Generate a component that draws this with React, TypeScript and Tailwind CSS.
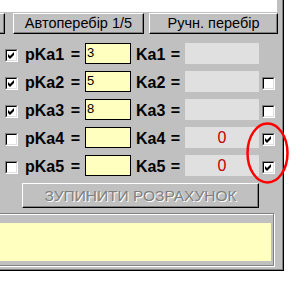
import React from "react";

const Check = ({ checked }: { checked: boolean }) => (
  <div className="w-[13px] h-[13px] flex-none border border-t-[#808080] border-l-[#808080] border-r-white border-b-white">
    <div className="w-full h-full border border-t-black border-l-black border-r-[#dfdfdf] border-b-[#dfdfdf] bg-white flex items-center justify-center">
      {checked && (
        <svg width="7" height="7" viewBox="0 0 7 7">
          <path d="M0 2 L2 4 L6 0 L6 3 L2 7 L0 5 Z" fill="black" />
        </svg>
      )}
    </div>
  </div>
);

const btn =
  "flex-none flex items-center justify-center bg-[#c0c0c0] border border-t-white border-l-white border-r-black border-b-black shadow-[inset_-1px_-1px_0_#808080]";

const rows = [
  { i: 1, left: true, val: "3", ka: "", right: null as boolean | null },
  { i: 2, left: true, val: "5", ka: "", right: false },
  { i: 3, left: true, val: "8", ka: "", right: false },
  { i: 4, left: false, val: "", ka: "0", right: true },
  { i: 5, left: false, val: "", ka: "0", right: true },
];

export default function App() {
  return (
    <div
      className="relative w-[305px] h-[287px] bg-white overflow-hidden"
      style={{ fontFamily: "'Liberation Sans', Arial, sans-serif" }}
    >
      <div className="relative w-[284px] h-[271px] bg-[#c0c0c0] overflow-hidden flex flex-col items-start shadow-[inset_-1px_-1px_0_#000,inset_-2px_-2px_0_#808080]">
        <div className="h-[12px] w-[277px] bg-white flex-none" />
        <div className="flex mt-[1px] h-[21px] flex-none">
          <div className={btn + " h-[21px] w-[40px] ml-[-35px]"} />
          <div className={btn + " h-[21px] w-[131px] ml-[8px] text-[14.5px] text-black"}>
            Автоперебір 1/5
          </div>
          <div className={btn + " h-[21px] w-[129px] ml-[5px] text-[14.5px] text-black"}>
            Ручн. перебір
          </div>
        </div>

        <div className="flex flex-col gap-[7px] mt-[9px]">
          {rows.map((r) => (
            <div key={r.i} className="flex items-center h-[21px]">
              <div className="ml-[5px] mt-[3px]">
                <Check checked={r.left} />
              </div>
              <div className="ml-[7px] w-[60px] pr-[5px] flex justify-between text-[16px] font-bold text-black leading-none mt-[2px] whitespace-nowrap">
                <span>pKa{r.i}</span>
                <span>=</span>
              </div>
              <div className="w-[46px] h-[21px] bg-[#ffffc0] border border-black text-[13px] leading-[15px] pl-[1px] pt-[1px] text-black">
                {r.val}
              </div>
              <div className="ml-[5px] w-[49px] pr-[5px] flex justify-between text-[16px] font-bold text-black leading-none mt-[2px] whitespace-nowrap">
                <span>Ka{r.i}</span>
                <span>=</span>
              </div>
              <div className="w-[74px] h-[21px] bg-[#e0e0e0] flex items-center justify-center text-[16px] text-[#c00000]">
                {r.ka}
              </div>
              {r.right !== null && (
                <div className="ml-[3px] mt-[3px]">
                  <Check checked={r.right} />
                </div>
              )}
            </div>
          ))}
        </div>

        <div
          className={
            btn +
            " mt-[7px] ml-[22px] w-[237px] h-[25px] text-[15.5px] text-[#808080] [text-shadow:1px_1px_0_#fff]"
          }
        >
          ЗУПИНИТИ РОЗРАХУНОК
        </div>

        <div className="mt-[5px] ml-[-5px] w-[279px] h-[53px] flex-none border border-[#808080] shadow-[1px_1px_0_#fff,inset_1px_1px_0_#fff] pt-[9px] pr-[2px]">
          <div className="w-full h-[38px] bg-[#ffffc0]" />
        </div>
      </div>

      <svg
        className="absolute left-0 top-0 pointer-events-none"
        width="305"
        height="287"
        viewBox="0 0 305 287"
      >
        <ellipse cx="267.5" cy="153" rx="20" ry="29.5" fill="none" stroke="#ff0000" strokeWidth="2.5" />
      </svg>
    </div>
  );
}
